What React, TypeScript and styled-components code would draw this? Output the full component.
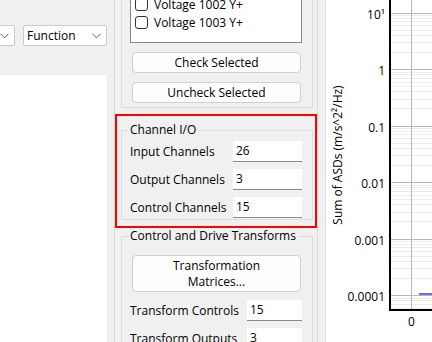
import React from 'react';
import styled, { createGlobalStyle } from 'styled-components';

const Global = createGlobalStyle`
  html, body { margin: 0; padding: 0; background: #f0f0f0; }
  body {
    font-family: "Open Sans", "Noto Sans", sans-serif;
    font-size: 12px;
    color: #000;
  }
  #root { width: 432px; height: 342px; overflow: hidden; }
  * { box-sizing: border-box; }
`;

const Window = styled.div`
  display: flex;
  width: 432px;
  height: 342px;
  overflow: hidden;
  background: #f0f0f0;
`;

/* ---------- left pane ---------- */
const LeftPane = styled.div`
  width: 114px;
  flex-shrink: 0;
  display: flex;
  flex-direction: column;
  overflow: hidden;
`;

const ToolRow = styled.div`
  display: flex;
  justify-content: flex-end;
  gap: 8px;
  padding: 25px 7px 0 0;
`;

const Combo = styled.div<{ $w: number }>`
  flex-shrink: 0;
  width: ${p => p.$w}px;
  height: 21px;
  background: #fff;
  border: 1px solid #cbcbcb;
  border-radius: 2px;
  display: flex;
  align-items: center;
  justify-content: space-between;
  padding: 0 5px 0 3px;
  line-height: 19px;
  white-space: nowrap;
`;

const WhiteArea = styled.div`
  flex: 1;
  margin: 29px 7px 0 0;
  background: #fff;
`;

/* ---------- middle pane ---------- */
const MiddlePane = styled.div`
  width: 204px;
  flex-shrink: 0;
  border-left: 1px solid #d9d9d9;
  border-right: 1px solid #d9d9d9;
  overflow: hidden;
`;

const ScrollContent = styled.div<{ $offset: number }>`
  margin-top: ${p => -p.$offset}px;
  display: flex;
  flex-direction: column;
`;

const TopGroup = styled.div`
  margin: 0 4px 0 6px;
  border: 1px solid #dcdcdc;
  border-top: none;
  padding: 0 10px 4px 8px;
  display: flex;
  flex-direction: column;
`;

const ListBox = styled.div`
  height: 86px;
  background: #fff;
  border: 1px solid #828790;
  padding: 1px 0 0 4px;
`;

const ListItem = styled.div`
  height: 18px;
  display: flex;
  align-items: center;
  gap: 6px;
  white-space: nowrap;
`;

const Check = styled.span`
  width: 13px;
  height: 13px;
  border: 1px solid #333;
  border-radius: 3px;
  background: #fff;
  flex-shrink: 0;
`;

const Button = styled.div<{ $h?: number; $top?: number }>`
  height: ${p => p.$h ?? 21}px;
  margin: ${p => p.$top ?? 9}px 1px 0 2px;
  background: #fdfdfd;
  border: 1px solid #d0d0d0;
  border-radius: 4px;
  display: flex;
  flex-direction: column;
  align-items: center;
  justify-content: center;
  line-height: 16px;
  text-align: center;
`;

const Highlight = styled.div`
  margin-top: 6px;
  border: 2px solid #ff0000;
  padding: 6px 2px 6px 4px;
`;

const Group = styled.fieldset<{ $ml?: number; $mr?: number; $mt?: number }>`
  margin: ${p => p.$mt ?? 0}px ${p => p.$mr ?? 0}px 0 ${p => p.$ml ?? 0}px;
  border: 1px solid #dcdcdc;
  padding: 0 10px 1px 8px;
  min-width: 0;
`;

const Legend = styled.legend`
  padding: 0 2px;
  margin-left: -2px;
  line-height: 16px;
  white-space: nowrap;
`;

const FieldGrid = styled.div<{ $label: number; $top: number }>`
  display: grid;
  grid-template-columns: ${p => p.$label}px 1fr;
  row-gap: 7px;
  padding-top: ${p => p.$top}px;
  align-items: center;
`;

const FieldLabel = styled.span`
  white-space: nowrap;
`;

const TextBox = styled.div`
  height: 21px;
  background: #fff;
  border-bottom: 1px solid #8a8a8a;
  padding-left: 3px;
  line-height: 20px;
`;

/* ---------- splitter + plot ---------- */
const Splitter = styled.div`
  width: 8px;
  flex-shrink: 0;
  border-right: 1px solid #e2e2e2;
`;

const PlotPane = styled.div`
  flex: 1;
  background: #fff;
  overflow: hidden;
`;

const Chevron = () => (
  <svg width="9" height="6" viewBox="0 0 9 6">
    <path d="M0.5 0.8 L4.5 4.8 L8.5 0.8" fill="none" stroke="#606060" strokeWidth="1" />
  </svg>
);

const DEC = 56.5;
const TOP = 12.5;
const labels = ['10\u00b9', '1', '0.1', '0.01', '0.001', '0.0001'];

const Plot = () => {
  const majors = labels.map((_, i) => TOP + i * DEC);
  const minors: number[] = [];
  for (let i = 0; i <= labels.length; i++) {
    const lower = TOP + i * DEC;
    for (let k = 2; k <= 9; k++) {
      const y = lower - Math.log10(k) * DEC;
      if (y > 0 && y < 309) minors.push(y);
    }
  }
  const ax = 64;
  const bottom = 310;
  return (
    <svg width="106" height="342" viewBox="0 0 106 342" style={{ display: 'block' }}>
      {minors.map((y, i) => (
        <line key={'m' + i} x1={ax} x2={106} y1={Math.round(y) + 0.5} y2={Math.round(y) + 0.5} stroke="#ececec" strokeWidth="1" />
      ))}
      {majors.map((y, i) => (
        <line key={'M' + i} x1={ax} x2={106} y1={Math.round(y) + 0.5} y2={Math.round(y) + 0.5} stroke="#b8b8b8" strokeWidth="1" />
      ))}
      <line x1={85.5} x2={85.5} y1={0} y2={bottom} stroke="#b8b8b8" strokeWidth="1" />
      <line x1={93} x2={106} y1={294} y2={294} stroke="#1010e0" strokeWidth="1.2" />
      <line x1={ax} x2={ax} y1={0} y2={bottom + 1} stroke="#000" strokeWidth="2" />
      <line x1={ax - 1} x2={106} y1={bottom} y2={bottom} stroke="#000" strokeWidth="2" />
      {majors.map((y, i) => (
        <text key={'t' + i} x={59} y={y + 1.5} textAnchor="end" dominantBaseline="central"
          fontFamily='"Open Sans", sans-serif' fontSize="12" fill="#000">{labels[i]}</text>
      ))}
      <text x={85.5} y={321} textAnchor="middle" dominantBaseline="central"
        fontFamily='"Open Sans", sans-serif' fontSize="12" fill="#000">0</text>
      <text transform="translate(11.5 155) rotate(-90)" textAnchor="middle" dominantBaseline="central"
        fontFamily='"Open Sans", sans-serif' fontSize="12" fill="#000">Sum of ASDs (m/s^2{'\u00b2'}/Hz)</text>
    </svg>
  );
};

export default function App() {
  return (
    <>
      <Global />
      <Window>
        <LeftPane>
          <ToolRow>
            <Combo $w={60}><span>Type</span><Chevron /></Combo>
            <Combo $w={84}><span>Function</span><Chevron /></Combo>
          </ToolRow>
          <WhiteArea />
        </LeftPane>

        <MiddlePane>
          <ScrollContent $offset={43}>
            <TopGroup>
              <ListBox>
                <ListItem><Check />Voltage 1000 Y+</ListItem>
                <ListItem><Check />Voltage 1001 Y+</ListItem>
                <ListItem><Check />Voltage 1002 Y+</ListItem>
                <ListItem><Check />Voltage 1003 Y+</ListItem>
              </ListBox>
              <Button>Check Selected</Button>
              <Button>Uncheck Selected</Button>
            </TopGroup>

            <Highlight>
              <Group $mr={0}>
                <Legend>Channel I/O</Legend>
                <FieldGrid $label={103} $top={3}>
                  <FieldLabel>Input Channels</FieldLabel>
                  <TextBox>26</TextBox>
                  <FieldLabel>Output Channels</FieldLabel>
                  <TextBox>3</TextBox>
                  <FieldLabel>Control Channels</FieldLabel>
                  <TextBox>15</TextBox>
                </FieldGrid>
              </Group>
            </Highlight>

            <Group $ml={6} $mr={4} $mt={0}>
              <Legend>Control and Drive Transforms</Legend>
              <Button $h={37} $top={11}>
                <span>Transformation</span>
                <span>Matrices...</span>
              </Button>
              <FieldGrid $label={117} $top={8}>
                <FieldLabel>Transform Controls</FieldLabel>
                <TextBox>15</TextBox>
                <FieldLabel>Transform Outputs</FieldLabel>
                <TextBox>3</TextBox>
              </FieldGrid>
            </Group>
          </ScrollContent>
        </MiddlePane>

        <Splitter />
        <PlotPane>
          <Plot />
        </PlotPane>
      </Window>
    </>
  );
}
